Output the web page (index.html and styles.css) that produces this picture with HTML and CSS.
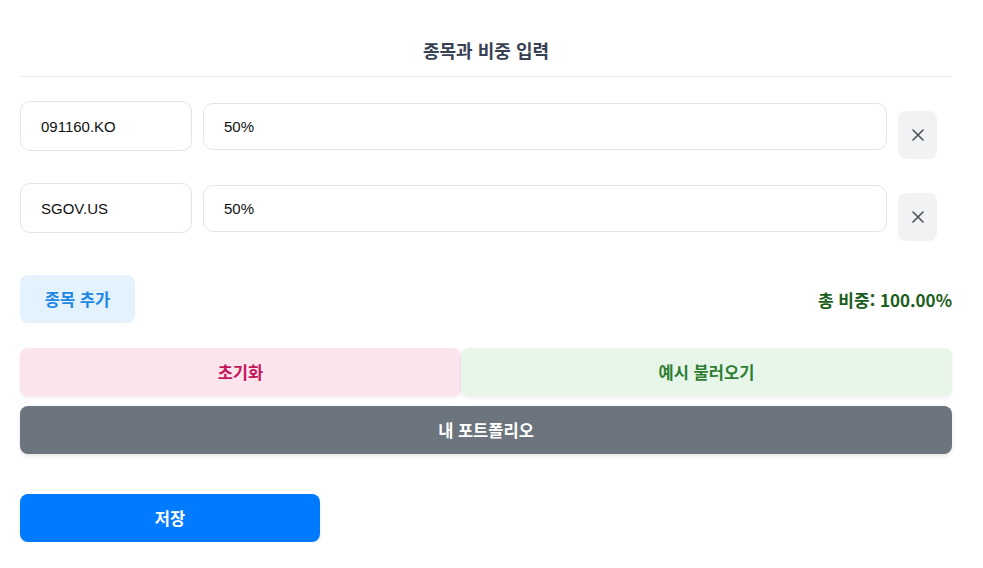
FILE: index.html
```html
<!DOCTYPE html>
<html lang="ko">
<head>
<meta charset="utf-8">
<title>종목과 비중 입력</title>
<link rel="stylesheet" href="styles.css">
</head>
<body>
<div class="wrap">
  <h2 class="title">종목과 비중 입력</h2>
  <div class="row">
    <div class="field ticker">091160.KO</div>
    <div class="field weight">50%</div>
    <button class="remove" aria-label="삭제">
      <svg width="14" height="14" viewBox="0 0 14 14"><path d="M2 2L12 12M12 2L2 12" stroke="#4b5058" stroke-width="1.6" stroke-linecap="round"/></svg>
    </button>
  </div>
  <div class="row">
    <div class="field ticker">SGOV.US</div>
    <div class="field weight">50%</div>
    <button class="remove" aria-label="삭제">
      <svg width="14" height="14" viewBox="0 0 14 14"><path d="M2 2L12 12M12 2L2 12" stroke="#4b5058" stroke-width="1.6" stroke-linecap="round"/></svg>
    </button>
  </div>
  <div class="addrow">
    <button class="btn add">종목 추가</button>
    <div class="total">총 비중: 100.00%</div>
  </div>
  <div class="pair">
    <button class="btn reset">초기화</button>
    <button class="btn example">예시 불러오기</button>
  </div>
  <button class="btn mine">내 포트폴리오</button>
  <button class="btn save">저장</button>
</div>
</body>
</html>
```

FILE: styles.css
```css
* { box-sizing: border-box; }
body {
  margin: 0;
  background: #ffffff;
  font-family: "Noto Sans CJK KR", "Noto Sans", sans-serif;
}
.wrap {
  width: 932px;
  margin: 0 0 0 20px;
  padding-top: 38px;
}
.title {
  margin: 0;
  font-size: 18px;
  line-height: 24px;
  font-weight: 700;
  color: #374151;
  text-align: center;
  padding-bottom: 14px;
  border-bottom: 1px solid #e8e9ec;
}
.row {
  display: flex;
  align-items: flex-start;
  gap: 11px;
  margin-top: 24px;
}
.field {
  border: 1px solid #e3e4e6;
  border-radius: 10px;
  padding: 0 20px;
  font-family: "Liberation Sans", Arial, sans-serif;
  font-size: 15px;
  color: #111;
  display: flex;
  align-items: center;
  background: #fff;
}
.ticker {
  width: 172px;
  height: 50px;
}
.weight {
  flex: 1;
  height: 47px;
  margin-top: 2px;
}
.remove {
  width: 39px;
  height: 48px;
  margin-top: 10px;
  margin-right: 15px;
  border: none;
  border-radius: 8px;
  background: #f1f2f4;
  display: flex;
  align-items: center;
  justify-content: center;
  padding: 0;
}
.addrow {
  display: flex;
  justify-content: space-between;
  align-items: center;
  margin-top: 34px;
}
.btn {
  border: none;
  font-family: "Noto Sans CJK KR", "Noto Sans", sans-serif;
  font-weight: 700;
  font-size: 16.5px;
  border-radius: 8px;
  height: 48px;
  padding: 0;
  cursor: pointer;
}
.add {
  width: 115px;
  background: #e3f2fd;
  color: #1e88e5;
}
.total {
  font-size: 17px;
  font-weight: 700;
  color: #1b5e20;
}
.pair {
  display: flex;
  margin-top: 25px;
}
.pair .btn {
  flex: 1 1 auto;
  box-shadow: 0 2px 4px rgba(0,0,0,0.07);
}
.reset {
  background: #fce4ec;
  color: #c2185b;
}
.example {
  background: #e8f5e9;
  color: #2e7d32;
}
.mine {
  display: block;
  width: 100%;
  margin-top: 10px;
  background: #6c757d;
  color: #ffffff;
  box-shadow: 0 2px 4px rgba(0,0,0,0.1);
}
.save {
  display: block;
  width: 300px;
  margin-top: 40px;
  background: #007bff;
  color: #ffffff;
  box-shadow: 0 2px 4px rgba(0,0,0,0.08);
}
```
